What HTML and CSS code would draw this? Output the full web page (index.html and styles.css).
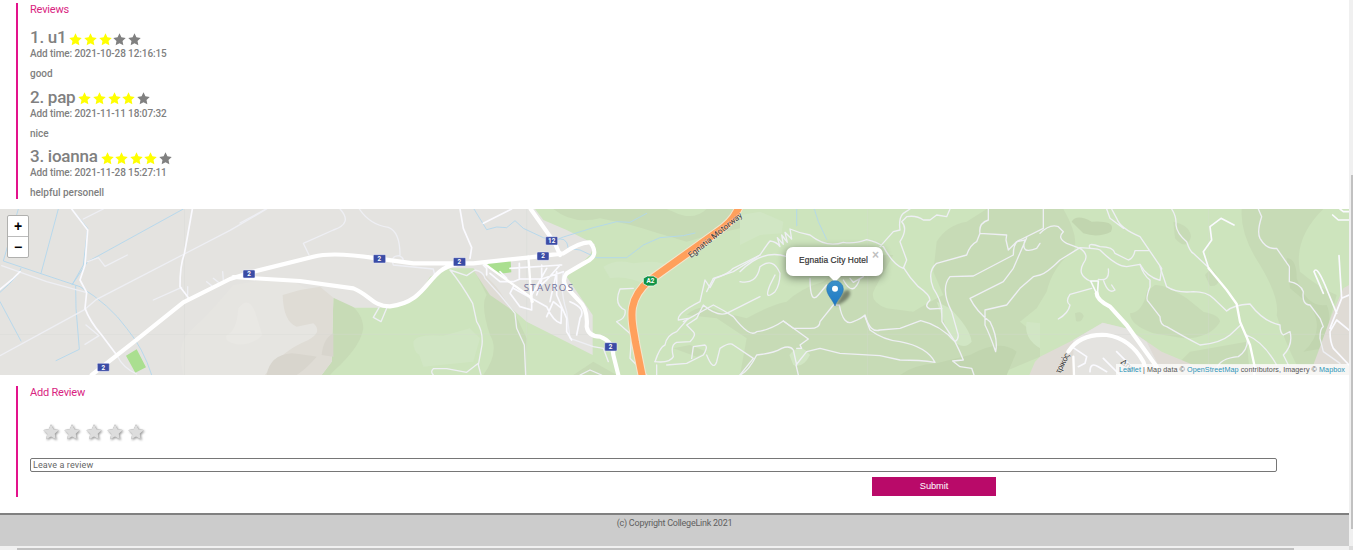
FILE: index.html
```html
<!DOCTYPE html>
<html lang="en">
<head>
<meta charset="utf-8">
<title>CollegeLink</title>
<link rel="stylesheet" href="styles.css">
</head>
<body>
<svg class="defs" width="0" height="0" aria-hidden="true">
  <symbol id="star" viewBox="0 0 24 24"><path d="M12 .5l3.500 7.500 8 1-5.900 5.600 1.500 8.200L12 18.800l-7.100 4 1.500-8.200L.5 9l8-1z"/></symbol>
</svg>
<div class="viewport">
<main class="page">
  <section class="panel reviews">
    <h2 class="panel-title">Reviews</h2>
    <article class="review">
      <div class="review-head"><h3 class="name">1. u1</h3><span class="stars"><svg class="on"><use href="#star"/></svg><svg class="on"><use href="#star"/></svg><svg class="on"><use href="#star"/></svg><svg><use href="#star"/></svg><svg><use href="#star"/></svg></span></div>
      <p class="time">Add time: 2021-10-28 12:16:15</p>
      <p class="comment">good</p>
    </article>
    <article class="review">
      <div class="review-head"><h3 class="name">2. pap</h3><span class="stars"><svg class="on"><use href="#star"/></svg><svg class="on"><use href="#star"/></svg><svg class="on"><use href="#star"/></svg><svg class="on"><use href="#star"/></svg><svg><use href="#star"/></svg></span></div>
      <p class="time">Add time: 2021-11-11 18:07:32</p>
      <p class="comment">nice</p>
    </article>
    <article class="review">
      <div class="review-head"><h3 class="name">3. ioanna</h3><span class="stars"><svg class="on"><use href="#star"/></svg><svg class="on"><use href="#star"/></svg><svg class="on"><use href="#star"/></svg><svg class="on"><use href="#star"/></svg><svg><use href="#star"/></svg></span></div>
      <p class="time">Add time: 2021-11-28 15:27:11</p>
      <p class="comment">helpful personell</p>
    </article>
  </section>

  <section class="map">
    <svg class="map-art" viewBox="0 12 4047 498" preserveAspectRatio="none">
      <rect class="forest" y="12" width="4047" height="498"/>
      <!-- hills -->
      <g class="hill">
        <path d="M1000 278C1060 290 1090 330 1090 370C1080 430 1020 480 990 510H960L995 470Z"/>
        <path d="M1420 190L1510 250L1540 315L1580 400L1575 510H1450Q1500 440 1470 390Q1440 300 1460 270Z"/>
        <path d="M1660 12Q1720 60 1800 40Q1900 60 1960 80L2060 110Q2130 90 2220 70V12H2120Q2080 50 2020 20L2000 12Z"/>
        <path d="M1920 185Q1950 170 1980 185Q1990 205 1960 207Q1930 205 1920 185Z"/>
        <path d="M2060 330Q2100 290 2160 320L2240 340Q2310 300 2360 290Q2400 250 2470 230L2560 150H2680Q2640 220 2620 260Q2610 290 2660 310L2740 320Q2790 290 2830 270L2800 200L2810 110Q2840 60 2900 50L2960 12H3190Q3240 100 3220 140Q3160 180 3140 260L3110 310L3060 350L3120 400V455L2990 510H2220L2240 400L2150 340Z"/>
        <path d="M3465 240Q3500 240 3560 280L3610 320Q3660 330 3660 350Q3630 400 3550 400L3460 385Q3390 360 3390 325Q3430 320 3440 260Z"/>
        <path d="M3725 12H3970Q3880 100 3900 200Q3960 250 4010 270L3950 480H3890Q3850 400 3830 330Q3840 280 3780 180Q3720 90 3725 12ZM3500 510L3570 440L3740 410L3750 510Z"/>
        <path d="M3520 50Q3570 60 3573 95Q3560 140 3525 100ZM3615 210Q3640 175 3655 225Q3655 245 3630 243ZM3225 325Q3245 315 3251 333Q3244 355 3228 348Z"/>
        <path d="M1720 510L1780 470L1850 510ZM2020 430L2070 420L2120 440L2090 455Z"/>
      </g>
      <g class="hill-dark">
        <path d="M3215 50Q3230 25 3275 50Q3350 45 3333 80Q3295 100 3250 85ZM2700 510Q2740 480 2810 475L2910 450Q3000 400 3050 440L3020 510ZM3860 160Q3890 160 3890 220Q3920 310 3980 300Q4000 340 3970 430L3910 440Q3980 380 3930 300L3870 250Z"/>
      </g>
      <g class="clearing">
        <path d="M1240 410Q1250 385 1330 392L1410 370L1440 400L1420 470L1270 485L1258 450Q1240 440 1240 410Z"/>
        <path d="M1810 185Q1850 160 1900 175Q1990 160 2010 190L1940 240Q1880 210 1830 220Z"/>
        <path d="M2220 30L2280 20L2350 50L2345 85L2280 90L2220 120ZM2810 290L2850 310Q2910 370 2915 410Q2890 440 2850 400ZM2368 450Q2400 410 2430 450Q2410 490 2380 480ZM3080 350L3120 355V430Q3070 400 3080 350Z"/>
      </g>
      <path class="land" d="M0 12H1605L1630 45L1700 75L1785 118L1770 150L1700 215L1778 330V450L1580 350L1540 315L1420 190H1340L1290 215L1250 280L1150 308H1065L1000 278L995 470L965 510H0Z"/>
      <path class="town" d="M3088 510L3105 470L3120 455L3220 405L3308 353L3385 372L3485 440L3580 480L3940 480L3995 330L4030 250L4047 240V510Z"/>
      <path class="land" d="M3220 405L3308 353L3385 372L3440 410L3490 510H3220Z"/>
      <path class="slope-light" d="M550 510Q530 430 560 390L640 310L700 240L850 215L980 280L985 460L940 510Z"/>
      <path class="slope" d="M848 270L900 255L960 245L1000 278L995 470L965 510H795Q840 440 925 405Q970 380 940 355L890 365Q850 350 848 270Z"/>
      <path class="slope-dark" d="M800 510Q810 450 875 445Q920 450 950 455Q920 490 890 510ZM965 450Q970 400 1000 385V455Z"/>
      <path class="slope-pale" d="M715 310Q745 270 765 320L787 390Q760 420 710 418Q670 410 680 390Q710 380 715 310Z"/>
      <path class="slope" d="M1420 195Q1450 195 1500 260L1535 315L1470 270Z"/>
      <path class="park" d="M378 452L410 433L438 487L406 503ZM1457 173L1532 167L1534 202L1495 207Z"/>
      <g class="seam"><path d="M0 388H4047M553 12V510M1580 12V510M2603 12V510M3626 12V510"/></g>
      <!-- streams -->
      <g class="water">
        <path d="M55 12L10 168L120 205L240 245Q330 300 380 370Q430 430 455 510M175 12L123 205M550 12L263 170L217 238M215 12L263 70L250 180L217 238M0 290L63 408M227 242L228 310L238 433L168 467M63 190Q60 210 0 262"/>
        <path d="M1422 12L1460 74L1490 66L1520 68L1545 47L1570 70L1630 98L1665 106L1690 96L1780 68L1850 50L1890 52L1940 25M1665 106Q1700 90 1705 130L1740 135L1790 158H1880L1930 120L1980 98L2050 92L2085 84M2390 12V62M2443 12L2455 50L2480 103"/>
      </g>
      <!-- minor roads -->
      <g class="lane">
        <path d="M5 182L140 230L258 262M250 42L310 12M0 452L255 313L290 283L553 147L690 76L800 12M263 170L295 158L315 184L382 150M460 285L545 247M258 360L297 392L255 418M350 450Q370 490 410 507M640 220L655 232M668 200L670 225M563 245V270M620 230L635 242"/>
        <path d="M720 54L798 12M1020 12Q1060 55 1000 75L910 115L927 150M1078 12Q1110 60 1165 67Q1200 80 1200 150M1180 180Q1170 152 1198 152Q1220 165 1200 170M1180 180L1300 192L1305 215M1137 308L1120 337L1143 350L1160 310"/>
        <path d="M1350 195L1400 212L1425 195Q1450 200 1455 220L1500 270L1545 325L1550 370L1573 420L1577 510M1350 195Q1380 230 1418 295L1430 350Q1450 380 1446 420L1435 480L1443 510M1435 475L1400 502L1340 491L1300 491Q1290 500 1300 510"/>
        <path d="M1690 200Q1680 260 1700 320L1710 400L1780 425L1810 430L1825 470M1740 510L1770 495L1805 510M1900 250L1860 252Q1840 300 1875 315Q1880 340 1850 350L1895 390L1890 460L1910 480L1940 510"/>
        <path d="M1965 470Q1980 425 1995 420Q2000 390 2030 380L2065 340L2035 345Q2030 325 2100 290L2115 225L2130 248L2145 220Q2180 210 2200 190L2280 150"/>
        <path d="M1965 470Q2010 475 2020 455Q2010 420 2030 412L2070 410Q2090 390 2080 380L2060 360L2090 340L2110 300Q2150 335 2180 325L2280 275M1970 510V480M2000 480L2060 475L2110 450Q2125 425 2115 420L2080 425L2075 460M2120 450Q2140 500 2150 470L2160 430Q2190 410 2200 420L2260 460L2220 510"/>
        <path d="M2050 350L2140 300Q2170 315 2200 335Q2250 400 2270 380Q2310 375 2350 348L2380 370H2430Q2460 370 2460 350L2500 300H2518Q2530 365 2560 350Q2585 340 2595 330Q2610 385 2640 375L2700 370L2762 347Q2820 360 2865 410Q2880 440 2890 465L2858 468L2880 485L2915 490L2922 510"/>
        <path d="M2595 335L2610 375Q2650 405 2700 410Q2780 425 2805 472Q2760 465 2700 465L2640 452L2520 445L2460 430L2420 440L2388 480L2395 510M2220 510Q2245 500 2270 450Q2320 445 2345 430Q2370 420 2380 435L2390 480M2350 348L2425 402L2400 420L2405 430L2390 430"/>
        <path d="M2120 260L2140 220L2200 200L2280 150Q2300 120 2310 108Q2330 110 2340 125L2332 98L2350 118L2345 90L2362 112L2355 82L2375 102L2370 72Q2400 85 2430 90Q2480 130 2530 112Q2560 118 2600 104Q2630 110 2650 125Q2680 180 2710 190L2720 165L2700 110Q2725 70 2705 50L2720 35Q2750 30 2770 45L2790 45L2810 30L2840 35L2850 12M2640 125L2680 80L2700 75Q2695 40 2710 25L2730 12M2220 200Q2290 130 2360 155M2220 230Q2270 240 2280 185Q2320 155 2340 205Q2340 240 2325 260Q2290 290 2310 240L2325 210M2430 220Q2430 300 2455 270L2480 240M2530 225Q2560 280 2580 220M2550 220L2560 232L2590 215"/>
        <path d="M2710 187Q2730 220 2755 245Q2790 270 2790 285Q2770 305 2790 312L2825 310L2826 350L2865 410Q2880 400 2872 380L2855 320Q2820 250 2850 215L2920 213L3040 150Q3040 110 3060 105L3130 70V12"/>
        <path d="M2825 310Q2820 280 2800 250Q2780 200 2810 175L2900 150Q2910 120 2930 110L2940 85L3020 90L3018 105L3025 135L3050 110L3075 105Q3060 150 3110 130L3120 115M3080 98L3040 190L3010 230L2910 280Q2930 320 2970 350Q2995 400 2987 440Q2970 390 2955 360V315L3020 300L3060 250L3100 215L3120 210Q3140 205 3180 165L3240 128Q3290 130 3300 135Q3350 185 3380 185L3420 178Q3440 215 3480 226L3485 190L3420 95Q3360 70 3350 40L3335 12M2940 85Q2935 55 2965 45V12M3120 85Q3150 55 3175 65L3190 80Q3170 100 3200 115L3240 130Q3270 150 3250 175Q3230 210 3270 228M3270 130Q3260 110 3300 125Q3340 125 3345 145L3385 165Q3400 160 3405 137H3445M3320 12L3330 40L3370 70M3275 250L3210 268Q3195 290 3210 300Q3205 325 3175 342"/>
        <path d="M3295 223Q3330 230 3325 192M3310 225Q3325 270 3345 255L3335 240M3420 178Q3430 210 3450 225V245Q3435 285 3445 290L3480 335Q3480 360 3500 365Q3560 400 3600 420Q3660 415 3690 390L3722 360M3480 185L3500 245Q3530 265 3580 260Q3620 260 3640 280L3680 318Q3700 300 3750 297Q3790 350 3840 360Q3840 385 3850 390L3870 380Q3880 420 3850 450L3865 480M3515 12Q3530 35 3528 60Q3530 85 3560 110Q3570 140 3580 145L3628 190M3775 12L3785 35Q3770 80 3780 100Q3800 135 3830 130L3868 185V230Q3900 235 3910 260Q3905 300 3930 300L3960 340L3970 365Q3960 370 3960 400L3970 440L4020 475M3740 390Q3750 430 3715 455Q3660 460 3650 490M3740 390Q3790 410 3830 480"/>
      </g>
      <!-- streets -->
      <g class="street">
        <path d="M577 12L553 147Q540 180 540 245L563 275L567 283M215 12L263 75L255 180L240 225L260 262L255 310Q270 350 305 390L350 450M60 200L40 220L0 253M1380 12L1390 70L1415 128L1410 160M1450 55L1535 12"/>
        <path d="M1450 180L1460 190V210M1470 205L1500 230H1540L1560 222H1625L1690 200M1500 200L1520 220M1530 190L1685 180M1558 175V220M1625 180V225L1610 270M1540 245L1530 265L1560 305L1595 315V270L1640 190M1600 260L1640 225L1680 180M1540 250L1640 305Q1660 350 1683 355L1685 310L1660 290L1640 335M1670 200L1650 290M1670 200L1670 270L1700 340V380L1715 405M1710 290Q1760 310 1740 340L1730 390"/>
        <path d="M3626 190L3610 140L3635 105L3630 65L3663 40L3702 60M4047 375L4010 345L3990 380Q3990 410 4000 430L4047 480M4017 152L4025 280L3990 370M4047 270L4025 280M4010 325L3975 240Q3950 180 3942 200L3970 265M3998 30L4015 45H4047M4020 12L4030 20H4047"/>
        <path d="M3215 425L3260 455L3255 475L3235 485M3270 500Q3270 470 3295 485L3320 500M3310 460L3360 510M3350 440L3390 480"/>
      </g>
      <g class="road-sm"><path d="M3626 190L3680 255L3710 297L3720 350L3750 420L3763 480V510M3220 455L3222 510M1455 178L1590 275L1598 290M1585 155L1595 290"/></g>
      <path class="street" d="M3272 228L3292 270M3272 228H3295L3292 270"/>
      <g class="road">
        <path d="M275 510L400 412L550 292L690 222L760 200L940 155Q1000 140 1130 160L1240 175H1420L1590 157L1690 145Q1740 110 1770 112Q1800 150 1760 170L1700 205Q1685 225 1698 245L1735 285Q1765 310 1760 365Q1765 395 1800 395Q1840 410 1840 450L1855 510M700 216L900 228L1060 250C1110 270 1120 305 1170 304C1290 290 1280 190 1370 178M1592 12L1665 115L1680 150M3290 265Q3290 285 3330 305L3380 360L3470 485M3205 440Q3240 385 3320 390Q3390 400 3430 470L3435 485"/>
      </g>
      <path class="motorway-edge" d="M2216 8Q2200 50 2150 82L1950 225C1870 290 1900 360 1906 410L1928 520"/>
      <path class="motorway" d="M2216 8Q2200 50 2150 82L1950 225C1870 290 1900 360 1906 410L1928 520"/>
      <!-- shields and labels -->
      <g class="shield">
        <rect x="292" y="475" width="36" height="24" rx="3"/><rect x="729" y="195" width="36" height="24" rx="3"/><rect x="1120" y="149" width="37" height="25" rx="3"/><rect x="1360" y="158" width="37" height="25" rx="3"/><rect x="1611" y="141" width="36" height="25" rx="3"/><rect x="1637" y="95" width="36" height="25" rx="3"/><rect x="1814" y="413" width="37" height="25" rx="3"/>
      </g>
      <path class="shield-a2" d="M1942 213H1960L1972 220V236L1960 243H1942L1930 236V220Z"/>
      <g class="shield-text">
        <text x="310" y="494">2</text><text x="747" y="214">2</text><text x="1138" y="169">2</text><text x="1378" y="178">2</text><text x="1629" y="160">2</text><text x="1655" y="115">12</text><text x="1832" y="432">2</text><text x="1951" y="235">A2</text>
      </g>
      <text class="place" x="1571" y="257" textLength="148">STAVROS</text>
      <text class="road-name" transform="translate(2073 160) rotate(-39)" textLength="200">Egnatia Motorway</text>
      <text class="road-name" transform="translate(3180 508) rotate(-64)" textLength="66">τρικός</text>
      <text class="road-name" transform="translate(3360 474) rotate(38)">Δημ</text>
    </svg>
    <div class="zoom-control"><button>+</button><button>−</button></div>
    <div class="popup">Egnatia City Hotel<span class="close">×</span></div>
    <svg class="marker" viewBox="0 0 36 28">
      <defs><linearGradient id="pin" x2="0" y2="1"><stop stop-color="#3c91c8"/><stop offset="1" stop-color="#1d78c6"/></linearGradient></defs>
      <path class="marker-shadow" d="M9 26L17 12Q25 7 24 15Q21 22 9 26Z"/>
      <path d="M9 26C7 20 .7 15 .7 9A8.300 8.300 0 0 1 17.300 9C17.300 15 11 20 9 26Z" fill="url(#pin)" stroke="#2c76ad" stroke-width=".6"/>
      <circle cx="9" cy="8.800" r="3" fill="#fff"/>
    </svg>
    <div class="attribution"><a>Leaflet</a> | Map data © <a>OpenStreetMap</a> contributors, Imagery © <a>Mapbox</a></div>
  </section>

  <section class="panel add-review">
    <h2 class="panel-title">Add Review</h2>
    <div class="rating"><svg><use href="#star"/></svg><svg><use href="#star"/></svg><svg><use href="#star"/></svg><svg><use href="#star"/></svg><svg><use href="#star"/></svg></div>
    <input class="review-input" placeholder="Leave a review">
    <button class="submit">Submit</button>
  </section>
  <footer class="footer">(c) Copyright CollegeLink 2021</footer>
</main>
<div class="scroll-v"><div class="thumb-v"></div></div>
<div class="scroll-h"><div class="thumb-h"></div></div>
<div class="corner"></div>
</div>
</body>
</html>
```
FILE: styles.css
```css
* { box-sizing: border-box; }
body { margin: 0; overflow: hidden; background: #fff; font-family: Roboto, "Liberation Sans", sans-serif; color: #808080; }
.defs { position: absolute; }
.viewport { display: grid; grid-template-columns: 1349px 4px; grid-template-rows: 546px 4px; width: 1353px; height: 550px; }
.page { display: flex; flex-direction: column; padding-top: 3px; overflow: hidden; }
h2, h3, p { margin: 0; }
.panel { margin-left: 16px; padding-left: 12px; border-left: 2px solid #e3128c; }
.panel-title { font-size: 11px; line-height: 13px; font-weight: 400; letter-spacing: -.2px; color: #d9237f; }
.reviews { height: 196px; margin-bottom: 10px; }
.reviews .panel-title { margin-bottom: 11px; }
.review { height: 59.500px; }
.review-head { display: flex; align-items: center; height: 21px; gap: 3px; }
.name { font-size: 17px; line-height: 21px; font-weight: 500; letter-spacing: -.25px; }
.stars { display: flex; gap: 1.600px; padding-top: 3px; }
.stars svg { width: 13px; height: 13px; fill: #808080; }
.stars .on { fill: #ff0; }
.time, .comment { font-size: 10px; line-height: 12px; font-weight: 500; }
.time { letter-spacing: -.1px; }
.comment { margin-top: 8px; letter-spacing: -.03px; }

.map { position: relative; flex: none; height: 166px; overflow: hidden; }
.map-art { display: block; width: 1349px; height: 166px; }
.forest { fill: #cde4bd; }
.hill { fill: #c7dbb6; }
.hill-dark { fill: #c1d5af; }
.clearing { fill: #d1e6c4; }
.land { fill: #e4e3e0; }
.town { fill: #dfdbd5; }
.slope-light { fill: #e6e5e1; }
.slope { fill: #dfdcd5; }
.slope-dark { fill: #d8d5cd; }
.slope-pale { fill: #e9e8e4; }
.park { fill: #aadf90; }
.seam { stroke: #d5d9d3; stroke-width: 1.500; opacity: .7; }
.water, .lane, .street, .road-sm, .road, .motorway, .motorway-edge { fill: none; stroke-linejoin: round; stroke-linecap: round; }
.water { stroke: #b0d7ee; stroke-width: 2.600; }
.lane { stroke: #eeeff4; stroke-width: 4; }
.street { stroke: #fafaff; stroke-width: 5; }
.road-sm { stroke: #fff; stroke-width: 7; }
.road { stroke: #fff; stroke-width: 12.500; }
.motorway-edge { stroke: #f3e6ce; stroke-width: 27; }
.motorway { stroke: #ffa05c; stroke-width: 21; }
.shield { fill: #3b4ca5; stroke: #eef; stroke-width: 1.500; }
.shield-a2 { fill: #129446; stroke: #fff; stroke-width: 2; }
.shield-text { fill: #fff; font: bold 19px Roboto, sans-serif; text-anchor: middle; }
.place { fill: #74749a; font: 29px "Open Sans", sans-serif; }
.road-name { fill: #353535; font: 25px Roboto, sans-serif; stroke: #fff8; stroke-width: 2; paint-order: stroke; }
.zoom-control { position: absolute; left: 7px; top: 6px; display: flex; flex-direction: column; width: 22px; height: 43px; border: 1px solid #b0b0ae; border-radius: 2px; background: #fff; }
.zoom-control button { flex: 1; padding: 0; border: 0; background: none; color: #000; font: bold 14px/20px "Liberation Sans", sans-serif; }
.zoom-control button + button { border-top: 1px solid #bbb; }
.popup { position: absolute; left: 786px; top: 38px; width: 97px; height: 29px; border-radius: 7px; background: #fff; box-shadow: 0 2px 8px #0007; color: #333; font: 8.400px/27px "Liberation Sans", sans-serif; letter-spacing: .1px; text-align: center; padding-right: 2px; white-space: nowrap; -webkit-text-stroke: .2px #333; }
.popup::after { content: ""; position: absolute; left: 43px; top: 29px; border: solid transparent; border-width: 6px 6px 0; border-top-color: #fff; }
.close { position: absolute; right: 4px; top: 0; color: #c0c0c0; font: bold 12px/16px "Liberation Sans", sans-serif; -webkit-text-stroke: 0; }
.marker { position: absolute; left: 826px; top: 71px; width: 36px; height: 28px; }
.marker-shadow { fill: #0006; filter: blur(1.500px); }
.attribution { position: absolute; right: 0; bottom: 0; height: 11px; padding: 0 4px 0 3px; background: #fffb; color: #555; font: 7.200px/11px "Liberation Sans", sans-serif; letter-spacing: .065px; white-space: nowrap; }
.attribution a { color: #2a93b8; }

.add-review { display: flex; flex-direction: column; align-items: flex-start; height: 111px; margin-top: 11px; }
.rating { display: flex; gap: 5.300px; margin: 25px 0 18px 13px; height: 16px; }
.rating svg { width: 16px; height: 16px; fill: #ddd; overflow: visible; filter: drop-shadow(.7px .3px 0 #999) drop-shadow(1px 1px 1px #0006); }
.review-input { width: 1247px; height: 14px; padding: 0 2px; border: 1px solid #767676; border-radius: 2px; font: 9px/12px Roboto, sans-serif; letter-spacing: .12px; }
.review-input::placeholder { color: #666; }
.submit { width: 124px; height: 19px; margin: 5px 0 0 842px; padding: 0; border: 0; background: #b90a69; color: #fff; font: 9.300px/19px "Liberation Sans", sans-serif; letter-spacing: -.1px; }
.footer { height: 33px; margin-top: 16px; border-top: 2px solid #808080; background: #ccc; color: #606060; text-align: center; font-size: 9px; line-height: 16px; letter-spacing: -.24px; }
.scroll-v { background: #f0f0f0; padding: 175px 0 0 2px; }
.thumb-v { height: 354px; background: #c1c1c1; }
.scroll-h { background: #f0f0f0; padding: 2px 0 0 17px; }
.thumb-h { width: 1277px; height: 2px; background: #c1c1c1; }
.corner { background: #dcdcdc; }
```
